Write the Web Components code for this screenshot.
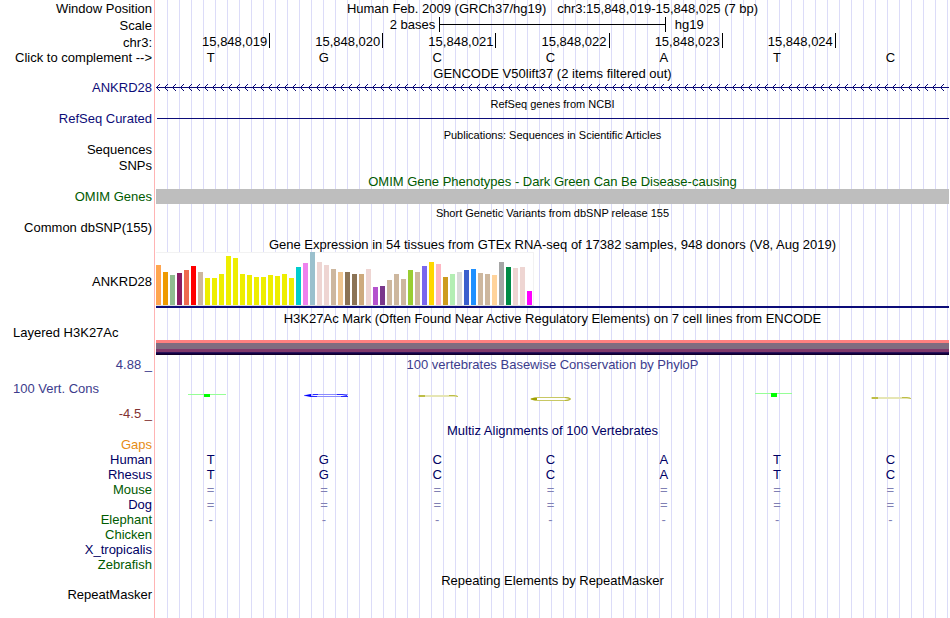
<!DOCTYPE html>
<html lang="en">
<head>
<meta charset="utf-8">
<title>Genome Browser - chr3:15,848,019-15,848,025</title>
<style>
    body {
        margin: 0;
        background: white;
        color: black;
        font-family: "Liberation Sans", Arial, sans-serif;
        font-size: 13px;
        line-height: 15px;
    }
</style>
</head>
<body>
<genome-browser></genome-browser>

<script>
const NAVY = '#0c0c78';
const DARK_NAVY = '#000064';
const GREEN = '#005a00';

// one line of the browser: label on the left, drawing area on the right
class TrackRow extends HTMLElement {
    constructor() {
        super();
        this.attachShadow({mode: 'open'});
    }

    connectedCallback() {
        const label = this.getAttribute('label') || '';
        const color = this.getAttribute('color') || 'black';
        const height = this.getAttribute('height') || '15';
        const align = this.getAttribute('align') === 'left' ? 'flex-start' : 'flex-end';
        this.shadowRoot.innerHTML = `
            <style>
                :host {
                    display: grid;
                    grid-template-columns: 154px minmax(0, 1fr);
                    grid-template-rows: minmax(0, 1fr);
                    column-gap: 2px;
                    height: ${height}px;
                    padding-right: 1px;
                }
                .label {
                    display: flex;
                    align-items: flex-end;
                    justify-content: ${align};
                    padding: 0 2px 0 13px;
                    color: ${color};
                    white-space: nowrap;
                }
                .plot {
                    display: flex;
                    flex-direction: column;
                    justify-content: flex-end;
                    min-width: 0;
                }
            </style>
            <div class="label"><slot name="label">${label}</slot></div>
            <div class="plot"><slot></slot></div>
        `;
    }
}

class TrackTitle extends HTMLElement {
    constructor() {
        super();
        this.attachShadow({mode: 'open'});
    }

    connectedCallback() {
        const color = this.getAttribute('color') || 'black';
        this.shadowRoot.innerHTML = `
            <style>
                :host {
                    display: block;
                    text-align: center;
                    white-space: nowrap;
                    color: ${color};
                }
                :host([small]) {
                    font-size: 11px;
                    line-height: 14px;
                }
            </style>
            <slot></slot>
        `;
    }
}

class ScaleBar extends HTMLElement {
    constructor() {
        super();
        this.attachShadow({mode: 'open'});
    }

    connectedCallback() {
        this.shadowRoot.innerHTML = `
            <style>
                :host {
                    display: grid;
                    grid-template-columns: 5fr 4fr 5fr;
                    height: 16px;
                }
                .left { text-align: right; padding-right: 4px; }
                .right { padding-left: 9px; }
                .bar {
                    display: flex;
                    align-items: center;
                    border: solid black;
                    border-width: 0 1px;
                    height: 15px;
                }
                .bar i { flex: 1; height: 1px; background: black; }
            </style>
            <span class="left">${this.getAttribute('length')}</span>
            <span class="bar"><i></i></span>
            <span class="right">${this.getAttribute('assembly')}</span>
        `;
    }
}

class PositionRuler extends HTMLElement {
    constructor() {
        super();
        this.attachShadow({mode: 'open'});
    }

    connectedCallback() {
        const ticks = this.getAttribute('ticks').split(' ');
        this.shadowRoot.innerHTML = `
            <style>
                :host {
                    display: grid;
                    grid-template-columns: repeat(7, 1fr);
                    margin-left: 1px;
                    height: 17px;
                }
                span {
                    height: 15px;
                    line-height: 17px;
                    text-align: right;
                    padding-right: 2px;
                    border-right: 1px solid black;
                }
            </style>
            ${ticks.map(t => `<span>${t}</span>`).join('')}
        `;
    }
}

class BaseRow extends HTMLElement {
    constructor() {
        super();
        this.attachShadow({mode: 'open'});
    }

    connectedCallback() {
        const bases = this.getAttribute('bases').split('');
        this.shadowRoot.innerHTML = `
            <style>
                :host {
                    display: grid;
                    grid-template-columns: repeat(7, 1fr);
                    color: ${this.getAttribute('color') || 'black'};
                }
                span { text-align: center; padding-right: 4px; }
            </style>
            ${bases.map(b => `<span>${b}</span>`).join('')}
        `;
    }
}

// gene on the reverse strand
class StrandLine extends HTMLElement {
    constructor() {
        super();
        this.attachShadow({mode: 'open'});
    }

    connectedCallback() {
        this.shadowRoot.innerHTML = `
            <style>
                :host { display: block; height: 14px; }
                svg { display: block; width: 100%; height: 14px; }
            </style>
            <svg shape-rendering="crispEdges" aria-hidden="true">
                <defs>
                    <pattern id="arrow" width="8" height="14" patternUnits="userSpaceOnUse">
                        <g fill="${NAVY}">
                            <rect x="0" y="6" width="8" height="1"/>
                            <rect x="1" y="5" width="1" height="3"/>
                            <rect x="2" y="4" width="1" height="1"/>
                            <rect x="2" y="8" width="1" height="1"/>
                            <rect x="3" y="3" width="1" height="1"/>
                            <rect x="3" y="9" width="1" height="1"/>
                        </g>
                    </pattern>
                </defs>
                <rect width="100%" height="14" fill="url(#arrow)"/>
            </svg>
        `;
    }
}

class ExpressionChart extends HTMLElement {
    constructor() {
        super();
        this.attachShadow({mode: 'open'});
    }

    connectedCallback() {
        const bars = [
            [40, '#ffa54f'], [33, '#ee9a00'], [30, '#8fbc8f'], [32, '#8b1c62'], [35, '#ee6a50'], [39, '#ff0000'],
            [33, '#cdb79e'], [27, '#eeee00'], [27, '#eeee00'], [31, '#eeee00'], [49, '#eeee00'], [47, '#eeee00'],
            [31, '#eeee00'], [30, '#eeee00'], [28, '#eeee00'], [28, '#eeee00'], [30, '#eeee00'], [29, '#eeee00'],
            [31, '#eeee00'], [27, '#eeee00'], [38, '#00cdcd'], [42, '#ee82ee'], [53, '#9ac0cd'], [43, '#eed5d2'],
            [40, '#eed5d2'], [36, '#cdb79e'], [33, '#eec591'], [33, '#8b7355'], [31, '#8b7355'], [31, '#cdaa7d'],
            [36, '#eed5d2'], [18, '#b452cd'], [19, '#7a378b'], [25, '#cdb79e'], [31, '#cdb79e'], [26, '#cdb79e'],
            [35, '#9acd32'], [33, '#cdb79e'], [39, '#7a67ee'], [43, '#ffd700'], [41, '#ffb6c1'], [28, '#cd9b1d'],
            [31, '#b4eeb4'], [33, '#d9d9d9'], [35, '#3a5fcd'], [36, '#1e90ff'], [32, '#cdb79e'], [31, '#cdb79e'],
            [30, '#ffd39b'], [43, '#a6a6a6'], [38, '#008b45'], [37, '#eed5d2'], [38, '#eed5d2'], [14, '#ff00ff']
        ];
        this.shadowRoot.innerHTML = `
            <style>
                :host { display: block; border-bottom: 2px solid ${NAVY}; }
                .bars {
                    display: flex;
                    align-items: flex-end;
                    gap: 2px;
                    width: max-content;
                    height: 53px;
                    padding-right: 1px;
                    background: linear-gradient(#f2f2f2 1px, white 1px);
                    border-right: 1px solid #f2f2f2;
                    border-bottom: 1px solid #dcdcdc;
                }
                i { width: 5px; }
            </style>
            <div class="bars">
                ${bars.map(([h, c]) => `<i style="height:${h}px;background:${c}"></i>`).join('')}
            </div>
        `;
    }
}

// sequence logo scaled by the conservation score, nearly flat here
class ConservationLogo extends HTMLElement {
    constructor() {
        super();
        this.attachShadow({mode: 'open'});
    }

    connectedCallback() {
        const cells = [
            `<rect x="32" y="22" width="38" height="1" fill="#96ff96"/><rect x="48" y="22" width="6" height="3" fill="#00ff00"/>`,
            `<path d="M79 22.5H46L35 23.5L46 24.5H72" fill="none" stroke="#8c8cff"/><path d="M35 23.5L42 22V25Z" fill="#0000ff"/><path d="M44 22.5H49M68 22.5H73L78 23.5M72 24.5H79M42 24.5H48" stroke="#2828ff" fill="none"/>`,
            `<rect x="35" y="23" width="39" height="2" fill="#e6e6b4"/><rect x="36" y="23" width="6" height="2" fill="#bebe46"/><path d="M66 23.5H71L75 24.5" stroke="#bebe46" fill="none"/>`,
            `<path d="M72 25.5H39L35 27L39 28.5H72L75 27Z" fill="white" stroke="#c8c864"/><path d="M34 27L37 26H41V28H37Z" fill="#a0a000"/><path d="M69 25.5L74 26.5M69 28.5L74 27.5" stroke="#b4b432"/>`,
            ``,
            `<rect x="33" y="21" width="37" height="1" fill="#96ff96"/><rect x="49" y="21" width="6" height="4" fill="#00ff00"/>`,
            `<rect x="35" y="25" width="39" height="2" fill="#e6e6b4"/><rect x="36" y="25" width="6" height="2" fill="#bebe46"/><path d="M66 25.5H71L75 26.5" stroke="#bebe46" fill="none"/>`
        ];
        this.shadowRoot.innerHTML = `
            <style>
                :host { display: grid; grid-template-columns: repeat(7, 1fr); height: 49px; }
                svg { display: block; width: 100%; height: 49px; }
            </style>
            ${cells.map(c => `<svg aria-hidden="true">${c}</svg>`).join('')}
        `;
    }
}

class GenomeBrowser extends HTMLElement {
    constructor() {
        super();
        this.attachShadow({mode: 'open'});
    }

    connectedCallback() {
        const species = [
            ['Human', DARK_NAVY, 'TGCCATC'],
            ['Rhesus', DARK_NAVY, 'TGCCATC'],
            ['Mouse', GREEN, '======='],
            ['Dog', DARK_NAVY, '======='],
            ['Elephant', GREEN, '-------'],
            ['Chicken', GREEN, ''],
            ['X_tropicalis', DARK_NAVY, ''],
            ['Zebrafish', GREEN, '']
        ];
        this.shadowRoot.innerHTML = `
            <style>
                :host {
                    display: block;
                    padding-bottom: 16px;
                    background:
                        linear-gradient(#ffb4b4, #ffb4b4) 154px 0 / 1px 100% no-repeat,
                        linear-gradient(white, white) 0 0 / 156px 100% no-repeat,
                        repeating-linear-gradient(to right, transparent 0 11px, #dcdcf8 11px 12px);
                }
                button {
                    padding: 0;
                    border: 0;
                    background: none;
                    color: inherit;
                    font: inherit;
                    cursor: pointer;
                }
                .item { height: 15px; background: #bebebe; }
                .line { height: 1px; margin: 0 0 7px 1px; background: ${NAVY}; }
                .layers {
                    height: 15px;
                    background: linear-gradient(#ff8080 3px, #806c80 3px 9px, #80386b 9px 12px, #2c1458 12px 13px, #140046 13px 14px, #100028 14px);
                }
                .gene { height: 34px; }
                .cons {
                    display: flex;
                    flex: 1;
                    flex-direction: column;
                    gap: 10px;
                }
                .min { color: #823232; text-align: right; }
            </style>
            <track-row label="Window Position" height="16"><track-title>Human Feb. 2009 (GRCh37/hg19) &nbsp; chr3:15,848,019-15,848,025 (7 bp)</track-title></track-row>
            <track-row label="Scale" height="17"><scale-bar length="2 bases" assembly="hg19"></scale-bar></track-row>
            <track-row label="chr3:" height="17"><position-ruler ticks="15,848,019 15,848,020 15,848,021 15,848,022 15,848,023 15,848,024"></position-ruler></track-row>
            <track-row><button slot="label" type="button">Click to complement --&gt;</button><base-row bases="TGCCATC"></base-row></track-row>

            <track-row height="16"><track-title>GENCODE V50lift37 (2 items filtered out)</track-title></track-row>
            <track-row label="ANKRD28" color="${NAVY}" height="14"><strand-line></strand-line></track-row>

            <track-row height="16"><track-title small>RefSeq genes from NCBI</track-title></track-row>
            <track-row label="RefSeq Curated" color="${NAVY}"><div class="line"></div></track-row>

            <track-row height="16"><track-title small>Publications: Sequences in Scientific Articles</track-title></track-row>
            <track-row label="Sequences"></track-row>
            <track-row label="SNPs" height="16"></track-row>

            <track-row height="16"><track-title color="${GREEN}">OMIM Gene Phenotypes - Dark Green Can Be Disease-causing</track-title></track-row>
            <track-row label="OMIM Genes" color="${GREEN}"><div class="item"></div></track-row>

            <track-row height="16"><track-title small>Short Genetic Variants from dbSNP release 155</track-title></track-row>
            <track-row label="Common dbSNP(155)"></track-row>

            <track-row height="17"><track-title>Gene Expression in 54 tissues from GTEx RNA-seq of 17382 samples, 948 donors (V8, Aug 2019)</track-title></track-row>
            <track-row height="56"><div slot="label" class="gene">ANKRD28</div><expression-chart></expression-chart></track-row>

            <track-row height="18"><track-title>H3K27Ac Mark (Often Found Near Active Regulatory Elements) on 7 cell lines from ENCODE</track-title></track-row>
            <track-row label="Layered H3K27Ac" align="left" height="14"></track-row>
            <track-row><div class="layers"></div></track-row>

            <track-row label="4.88 _" color="#3c3c8c" height="17"><track-title color="#3c3c8c">100 vertebrates Basewise Conservation by PhyloP</track-title></track-row>
            <track-row color="#3c3c8c" height="49">
                <div slot="label" class="cons"><span>100 Vert. Cons</span><span class="min">-4.5 _</span></div>
                <conservation-logo></conservation-logo>
            </track-row>

            <track-row height="17"><track-title color="${DARK_NAVY}">Multiz Alignments of 100 Vertebrates</track-title></track-row>
            <track-row label="Gaps" color="#e68c14" height="14"></track-row>
            ${species.map(([name, color, bases]) => `
                <track-row label="${name}" color="${color}">
                    <base-row bases="${bases}" color="${bases[0] === 'T' ? DARK_NAVY : '#8080b4'}"></base-row>
                </track-row>`).join('')}

            <track-row height="16"><track-title>Repeating Elements by RepeatMasker</track-title></track-row>
            <track-row label="RepeatMasker" height="14"></track-row>
        `;
    }
}

customElements.define('track-row', TrackRow);
customElements.define('track-title', TrackTitle);
customElements.define('scale-bar', ScaleBar);
customElements.define('position-ruler', PositionRuler);
customElements.define('base-row', BaseRow);
customElements.define('strand-line', StrandLine);
customElements.define('expression-chart', ExpressionChart);
customElements.define('conservation-logo', ConservationLogo);
customElements.define('genome-browser', GenomeBrowser);
</script>
</body>
</html>
